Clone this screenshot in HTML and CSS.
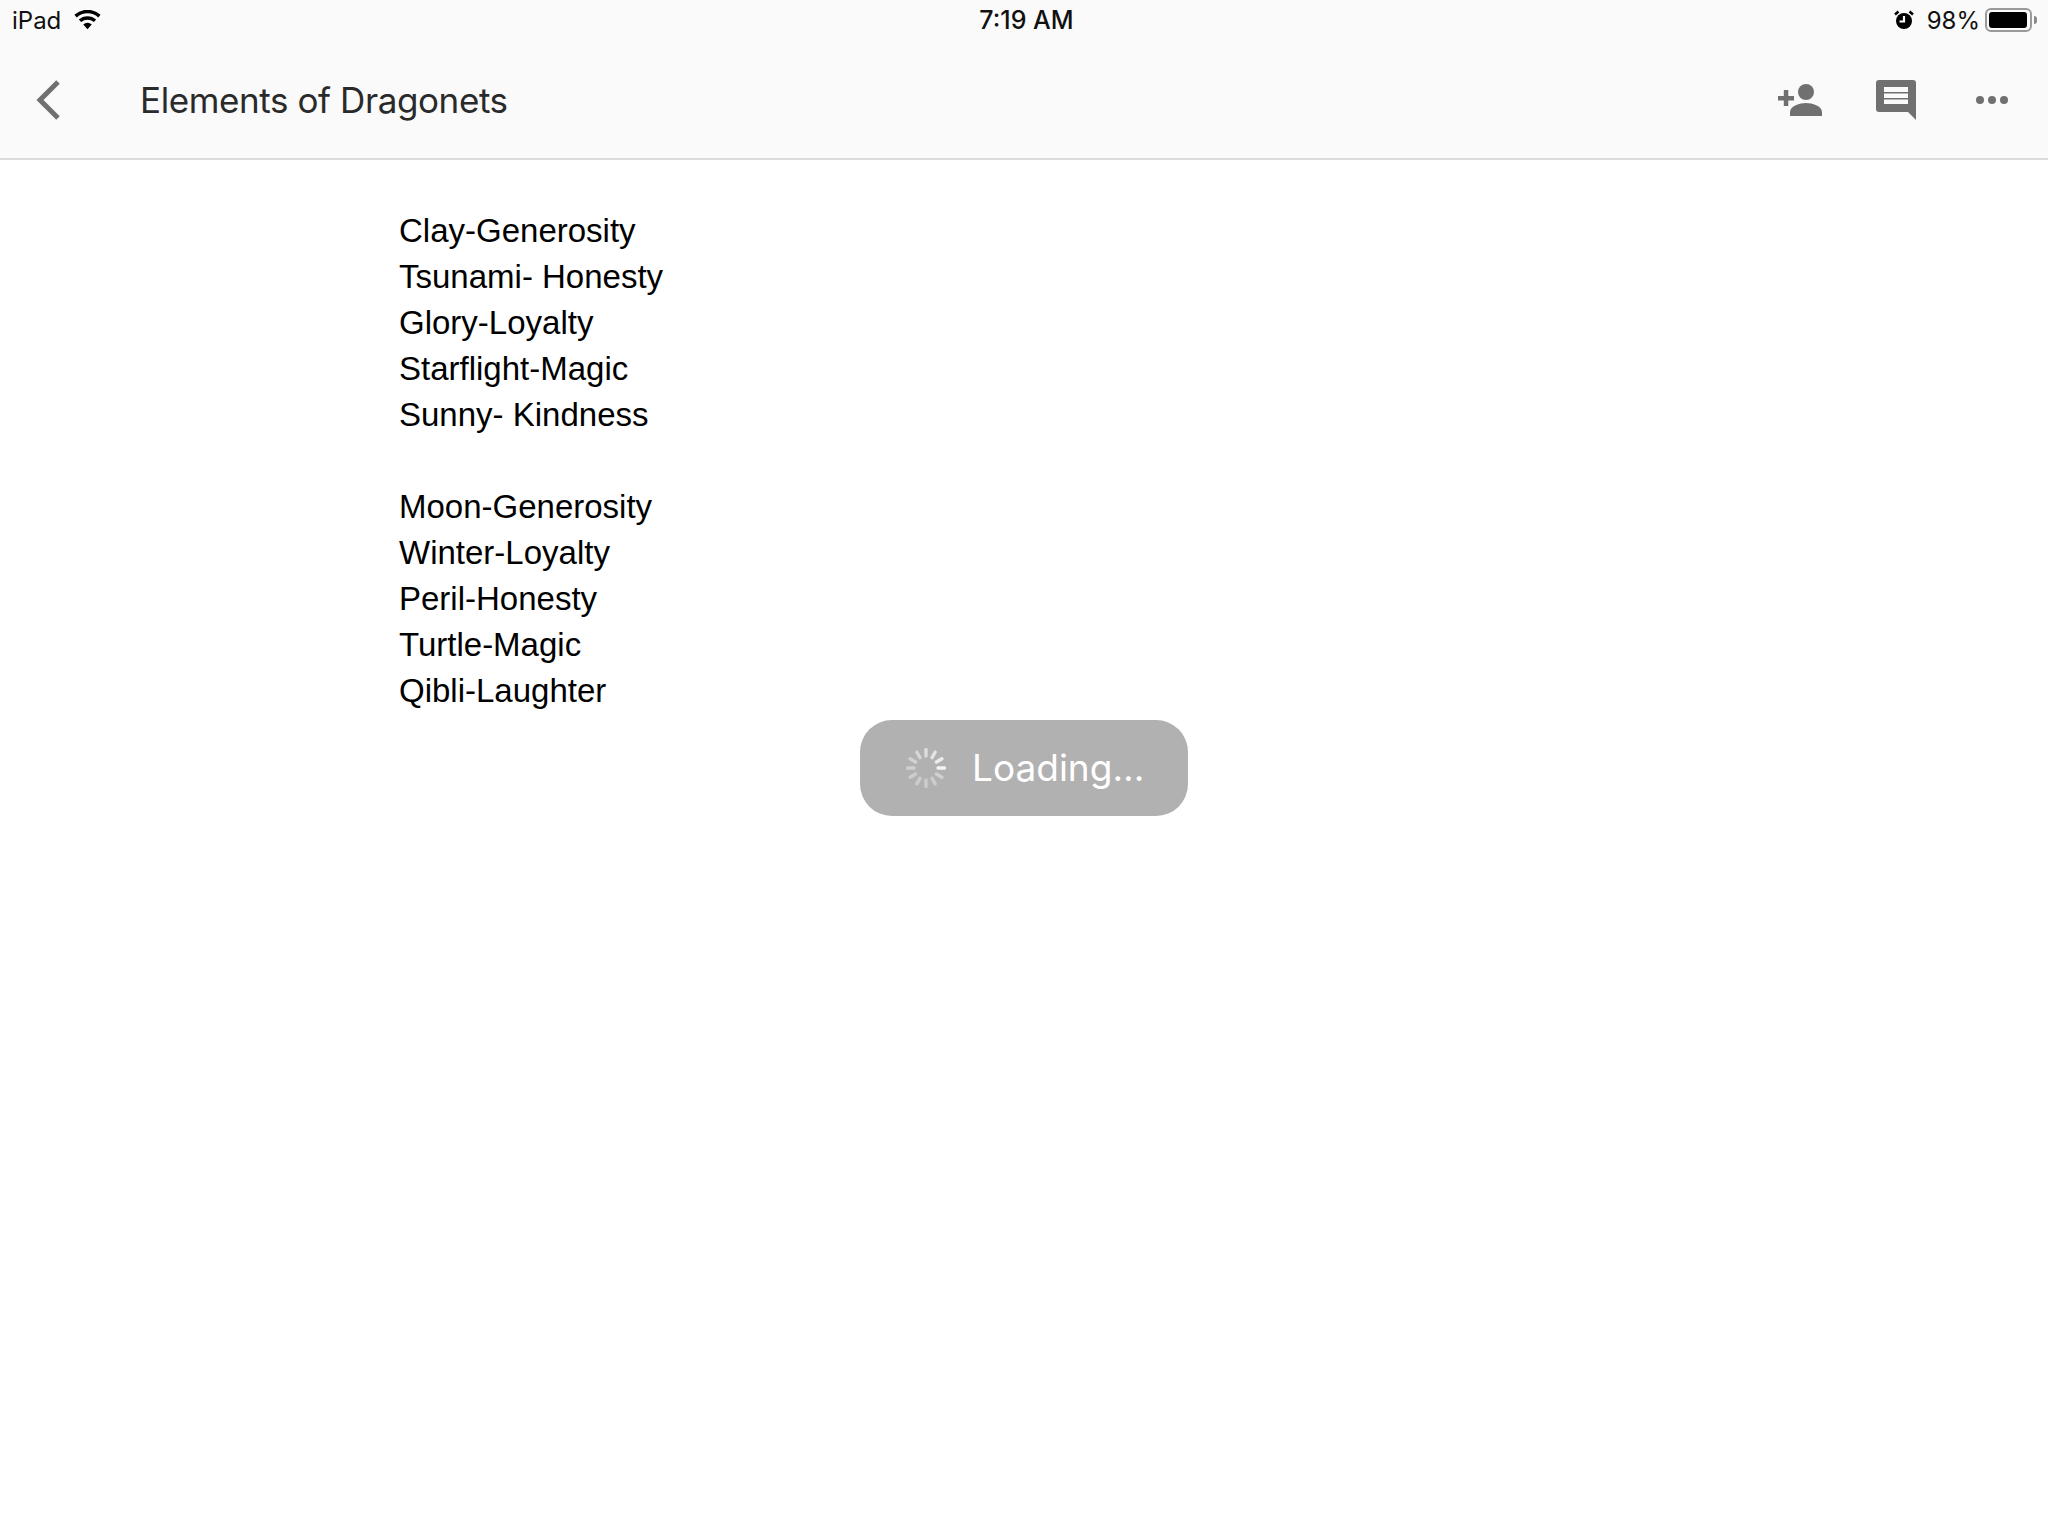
FILE: index.html
```html
<!DOCTYPE html>
<html lang="en">
<head>
<meta charset="utf-8">
<title>Elements of Dragonets</title>
<link rel="stylesheet" href="styles.css">
</head>
<body>
<header class="top">
  <div class="status">
    <div class="status-left">
      <span>iPad</span>
      <svg class="wifi" viewBox="0 0 28 20" width="27" height="20"><path d="M14 19.500 9.600 14.600a6.600 6.600 0 0 1 8.800 0Z"/><path d="M7.400 12.200 5 9.600a13.400 13.400 0 0 1 18 0l-2.400 2.600a10 10 0 0 0-13.200 0Z"/><path d="M2.900 7.300.4 4.600a20.300 20.300 0 0 1 27.200 0l-2.500 2.700a16.600 16.600 0 0 0-22.200 0Z"/></svg>
    </div>
    <div class="status-time">7:19 AM</div>
    <div class="status-right">
      <svg class="alarm" viewBox="0 0 20 20" width="20" height="20"><circle cx="10" cy="11" r="8"/><path d="M1 4.500 4.500 1.500M19 4.500 15.500 1.500" class="alarm-ears"/><path d="M10 6v5.500H5.500" class="alarm-hands"/></svg>
      <span class="pct">98%</span>
      <span class="battery"><span class="battery-fill"></span></span>
      <span class="battery-tip"></span>
    </div>
  </div>
  <div class="toolbar">
    <svg class="back" viewBox="0 0 24 40" width="24" height="40"><path d="M22 2 4 20l18 18"/></svg>
    <h1 class="title">Elements of Dragonets</h1>
    <div class="actions">
      <svg class="act-person" viewBox="0 0 44 32" width="44" height="32"><rect x="0" y="12" width="16" height="4.500"/><rect x="5.800" y="6" width="4.500" height="16"/><circle cx="28" cy="8" r="8"/><path d="M12 32v-4c0-6 10-9 16-9s16 3 16 9v4Z"/></svg>
      <svg class="act-chat" viewBox="0 0 40 40" width="40" height="40"><path d="M3 0h34a3 3 0 0 1 3 3v37l-8-8H3a3 3 0 0 1-3-3V3a3 3 0 0 1 3-3Z"/><path class="cut" d="M8 7h24v5H8zM8 13.500h24V18H8zM8 19.500h24V24H8z"/></svg>
      <svg viewBox="0 0 32 8" width="32" height="8"><circle cx="4" cy="4" r="4"/><circle cx="16" cy="4" r="4"/><circle cx="28" cy="4" r="4"/></svg>
    </div>
  </div>
</header>
<main class="doc">
  <p>Clay-Generosity</p>
  <p>Tsunami- Honesty</p>
  <p>Glory-Loyalty</p>
  <p>Starflight-Magic</p>
  <p>Sunny- Kindness</p>
  <p class="blank">&nbsp;</p>
  <p>Moon-Generosity</p>
  <p>Winter-Loyalty</p>
  <p>Peril-Honesty</p>
  <p>Turtle-Magic</p>
  <p>Qibli-Laughter</p>
</main>
<div class="toast">
  <svg class="spinner" viewBox="0 0 40 40" width="40" height="40">
    <g stroke-width="3.400" stroke-linecap="round" fill="none">
      <path d="M32 20h6.400" stroke="#f4f4f4"/>
      <path d="M30.400 14l5.500-3.200" stroke="#ececec"/>
      <path d="M26 9.600l3.200-5.500" stroke="#e4e4e4"/>
      <path d="M20 8V1.600" stroke="#dcdcdc"/>
      <path d="M14 9.600l-3.200-5.500" stroke="#d6d6d6"/>
      <path d="M9.600 14l-5.500-3.200" stroke="#d2d2d2"/>
      <path d="M8 20H1.600" stroke="#cfcfcf"/>
      <path d="M9.600 26l-5.500 3.200" stroke="#cdcdcd"/>
      <path d="M14 30.400l-3.200 5.500" stroke="#cccccc"/>
      <path d="M20 32v6.400" stroke="#cccccc"/>
      <path d="M26 30.400l3.200 5.500" stroke="#cccccc"/>
      <path d="M30.400 26l5.500 3.200" stroke="#d0d0d0"/>
    </g>
  </svg>
  <span class="toast-text">Loading...</span>
</div>
</body>
</html>
```
FILE: styles.css
```css
* { box-sizing: border-box; }
html, body { margin: 0; padding: 0; background: #fff; }
body { width: 2048px; height: 1536px; position: relative; overflow: hidden; font-family: "Inter", "Liberation Sans", sans-serif; }
.top { background: #fafafa; border-bottom: 2px solid #dcdcdc; height: 160px; }
.status { height: 40px; display: grid; grid-template-columns: 1fr auto 1fr; align-items: center; padding: 0 11px 0 12px; font-size: 24px; color: #111; }
.status-left { display: flex; align-items: center; gap: 13px; }
.wifi { fill: #000; }
.status-time { font-weight: 500; font-size: 25px; position: relative; left: 2px; }
.status-right { display: flex; align-items: center; justify-content: flex-end; }
.alarm { fill: #000; margin-right: 13px; }
.alarm-ears { stroke: #000; stroke-width: 2.500; fill: none; }
.alarm-hands { stroke: #fff; stroke-width: 2.200; fill: none; }
.pct { margin-right: 5px; }
.battery { width: 47px; height: 24px; border: 2px solid #9a9a9a; border-radius: 6px; padding: 2px; display: block; }
.battery-fill { display: block; height: 100%; background: #000; border-radius: 3px; width: 98%; }
.battery-tip { width: 3px; height: 8px; background: #8a8a8a; border-radius: 0 3px 3px 0; margin-left: 2px; }
.toolbar { height: 118px; display: flex; align-items: center; padding-left: 36px; padding-top: 2px; }
.back { fill: none; stroke: #707070; stroke-width: 5; flex: none; }
.title { margin: 0 0 0 80px; font-size: 35px; font-weight: 400; letter-spacing: -0.4px; color: #2a2a2a; white-space: nowrap; flex: 1; }
.actions { display: flex; align-items: center; padding-right: 40px; }
.actions svg { fill: #707070; display: block; }
.act-person { margin-right: 54px; }
.act-chat { margin-right: 60px; }
.actions .cut { fill: #fafafa; }
.doc { padding: 48px 0 0 399px; font-family: "Liberation Sans", Arial, sans-serif; font-size: 33px; line-height: 46px; color: #000; }
.doc p { margin: 0; }
.toast { position: absolute; left: 860px; top: 720px; width: 328px; height: 96px; border-radius: 32px; background: #b1b1b1; display: flex; align-items: center; padding-left: 46px; gap: 26px; }
.spinner { flex: none; }
.toast-text { color: #fff; font-size: 37px; margin-bottom: 2px; }
```
